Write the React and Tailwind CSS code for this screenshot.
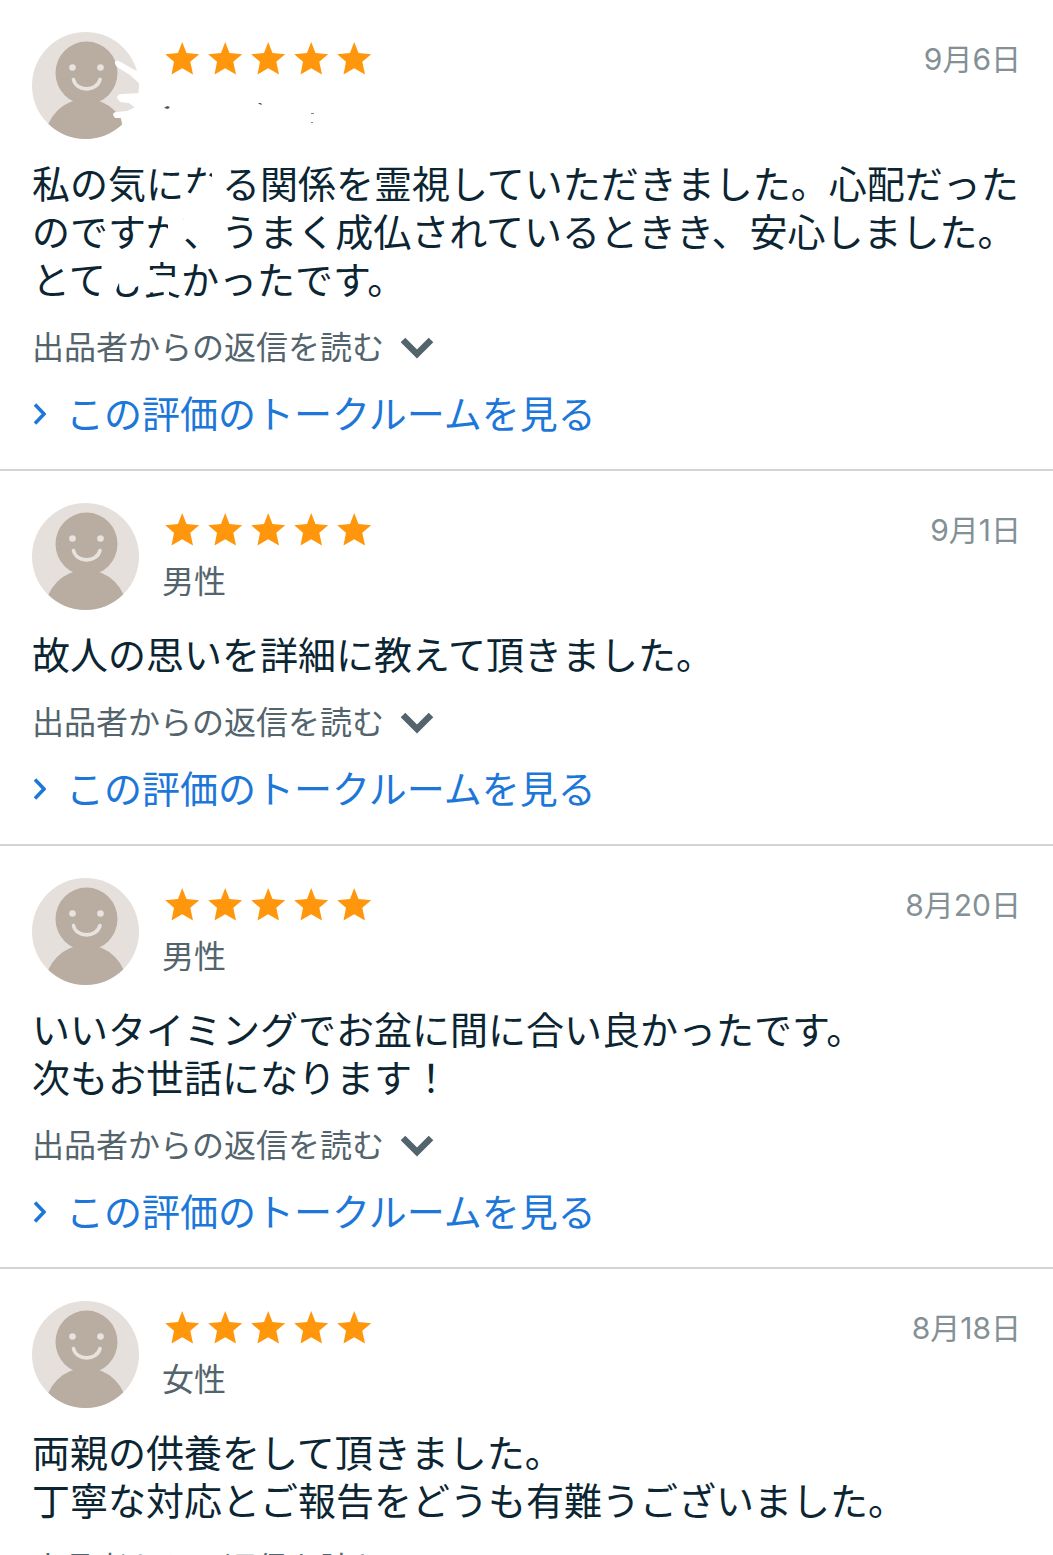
import React from 'react';

const reviews = [
  {
    id: 1,
    name: '',
    date: '9月6日',
    lines: [
      '私の気になる関係を霊視していただきました。心配だった',
      'のですが、うまく成仏されているときき、安心しました。',
      'とても良かったです。',
    ],
    erased: true,
  },
  { id: 2, name: '男性', date: '9月1日', lines: ['故人の思いを詳細に教えて頂きました。'] },
  {
    id: 3,
    name: '男性',
    date: '8月20日',
    lines: ['いいタイミングでお盆に間に合い良かったです。', '次もお世話になります！'],
  },
  {
    id: 4,
    name: '女性',
    date: '8月18日',
    lines: ['両親の供養をして頂きました。', '丁寧な対応とご報告をどうも有難うございました。'],
  },
];

const Avatar = ({ id }) => (
  <svg viewBox="0 0 107 107" className="size-[107px] shrink-0" aria-hidden="true">
    <clipPath id={`avatar-${id}`}>
      <circle cx="53.5" cy="53.5" r="53.5" />
    </clipPath>
    <g clipPath={`url(#avatar-${id})`}>
      <rect width="107" height="107" fill="#e5e0db" />
      <ellipse cx="54.5" cy="41" rx="31" ry="31.5" fill="#b9aca0" />
      <circle cx="54" cy="108" r="41" fill="#b9aca0" />
    </g>
    <circle cx="40.5" cy="35.5" r="3.3" fill="#e8e3de" />
    <circle cx="68.5" cy="35.5" r="3.3" fill="#e8e3de" />
    <path d="M41.5 47.5C44 60 65 60 68 47.5" fill="none" stroke="#e8e3de" strokeWidth="3.6" strokeLinecap="round" />
  </svg>
);

const Stars = () => (
  <div className="flex gap-2 pl-[3px] pt-2.5" role="img" aria-label="5つ星">
    {[1, 2, 3, 4, 5].map((n) => (
      <svg key={n} viewBox="0 0 35 33" className="h-[33px] w-[35px]" fill="#ff960c">
        <path d="M17.2 0L21.5 11L34.2 12.3L25.3 19.8L28 32.5L17.2 26.2L6.5 32.5L9 19.8L0.2 12.3L13 11Z" />
      </svg>
    ))}
  </div>
);

const Eraser = () => (
  <svg viewBox="0 0 420 310" className="pointer-events-none absolute left-0 top-0 h-[310px] w-[420px]" aria-hidden="true">
    <g fill="#fff">
      <path d="M115 64Q114 60 119 61L133 69L142 73V86L130 75L117 67Z" />
      <path d="M117 98Q117 94 122 94L141 93V104L134 107L129 103L120 102Z" />
      <path d="M113 115Q113 112 117 112L127 111L142 104V122L132 126L122 124L121 118L115 118Z" />
      <path d="M190 206L197 182L204 177L212 178V166H222L223 206Z" />
      <path d="M168 210H183V250H152L160 230L168 229Z" />
      <path d="M102 261H145V284L138 286L130 291L120 288L119 283L112 300H99Z" />
      <path d="M145 270H154L158 277H185V290L178 293L168 291L145 293Z" />
      <path d="M164 288H169V300H164Z" />
    </g>
    <g fill="#4b585d">
      <path d="M164 108l3-2 3 1-2 2z" />
      <path d="M258 103l3 0 1 2-3-1z" />
      <path d="M311 113h3v1h-3zM311 122h2v1h-2z" opacity="0.7" />
    </g>
  </svg>
);

const Review = ({ review }) => (
  <article className="relative border-b-2 border-[#d4d4d4] px-8 pb-[31px] pt-8">
    <header className="flex">
      <Avatar id={review.id} />
      <div className="ml-[23px] flex-1">
        <Stars />
        {review.name && <p className="mt-3 text-[32px] leading-[48px] text-[#53646d]">{review.name}</p>}
      </div>
      <time className="text-[30px] leading-[54px] text-[#839095]">{review.date}</time>
    </header>
    <p className="mt-[21px] whitespace-nowrap text-[38px] leading-[48px] text-[#0b2533]">
      {review.lines.map((line) => (
        <span key={line} className="block">
          {line}
        </span>
      ))}
    </p>
    <button type="button" className="mt-5 flex items-center gap-4 text-[32px] leading-[48px] text-[#53646d]">
      出品者からの返信を読む
      <svg viewBox="0 0 34 22" className="h-[22px] w-[34px]" fill="none" stroke="#53646d" strokeWidth="6.5">
        <path d="M3 3L17 17L31 3" />
      </svg>
    </button>
    <a href="#talkroom" className="mt-[18px] flex items-center text-[38px] leading-[48px] text-[#1d77d8]">
      <svg viewBox="0 0 14 22" className="mr-5 h-[22px] w-[14px]" fill="none" stroke="#1d77d8" strokeWidth="3.5">
        <path d="M3 1.5L12 11L3 20.5" />
      </svg>
      この評価のトークルームを見る
    </a>
    {review.erased && <Eraser />}
  </article>
);

const App = () => (
  <main className="h-screen overflow-hidden bg-white font-['Inter','Noto_Sans_CJK_JP',sans-serif]">
    {reviews.map((review) => (
      <Review key={review.id} review={review} />
    ))}
  </main>
);

export default App;
